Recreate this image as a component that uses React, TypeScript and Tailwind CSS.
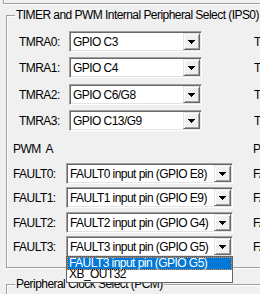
import React from 'react'

const tmraRows = [
  { left: 'TMRA0:', value: 'GPIO C3', right: 'TMRB0:' },
  { left: 'TMRA1:', value: 'GPIO C4', right: 'TMRB1:' },
  { left: 'TMRA2:', value: 'GPIO C6/G8', right: 'TMRB2:' },
  { left: 'TMRA3:', value: 'GPIO C13/G9', right: 'TMRB3:' },
]

const faultRows = [
  { left: 'FAULT0:', value: 'FAULT0 input pin (GPIO E8)', right: 'FAULT0:' },
  { left: 'FAULT1:', value: 'FAULT1 input pin (GPIO E9)', right: 'FAULT1:' },
  { left: 'FAULT2:', value: 'FAULT2 input pin (GPIO G4)', right: 'FAULT2:' },
  { left: 'FAULT3:', value: 'FAULT3 input pin (GPIO G5)', right: 'FAULT3:' },
]

function Arrow() {
  return (
    <svg width="7" height="4" viewBox="0 0 7 4" shapeRendering="crispEdges">
      <rect x="0" y="0" width="7" height="1" fill="#000" />
      <rect x="1" y="1" width="5" height="1" fill="#000" />
      <rect x="2" y="2" width="3" height="1" fill="#000" />
      <rect x="3" y="3" width="1" height="1" fill="#000" />
    </svg>
  )
}

function Combo({ value, className }: { value: string; className: string }) {
  return (
    <div
      className={`flex h-[21px] shrink-0 bg-white p-[1px] border border-t-[#a0a0a0] border-l-[#a0a0a0] border-b-white border-r-white shadow-[inset_1px_1px_0_#696969,inset_-1px_-1px_0_#e3e3e3] ${className}`}
    >
      <div className="flex flex-1 items-center overflow-hidden whitespace-nowrap pl-[2px]">{value}</div>
      <div className="flex h-[17px] w-[17px] items-center justify-center bg-[#f0f0f0] border border-t-[#e3e3e3] border-l-[#e3e3e3] border-b-[#696969] border-r-[#696969] shadow-[inset_1px_1px_0_#fff,inset_-1px_-1px_0_#a0a0a0]">
        <Arrow />
      </div>
    </div>
  )
}

function GroupTitle({ children }: { children: React.ReactNode }) {
  return (
    <div className="-mt-[8px] ml-[8px] w-fit whitespace-nowrap bg-[#f0f0f0] px-[1px] leading-[15px]">
      {children}
    </div>
  )
}

export default function App() {
  return (
    <div className="h-[294px] w-[260px] overflow-hidden bg-[#f0f0f0] font-['Liberation_Sans',Arial,sans-serif] text-[12px] tracking-[-0.55px] text-black">
      {/* bottom edge of the box above */}
      <div className="ml-[3px] h-[4px] w-[600px] border-b border-l border-[#a0a0a0] shadow-[inset_1px_0_0_#fff,0_1px_0_#fff]" />

      <div className="ml-[6px] mt-[11px] w-[520px] border border-[#a0a0a0] pb-[10px] shadow-[inset_1px_1px_0_#fff,1px_1px_0_#fff]">
        <GroupTitle>TIMER and PWM Internal Peripheral Select (IPS0)</GroupTitle>

        <div className="mt-[8px] flex flex-col">
          {tmraRows.map((r, i) => (
            <div
              key={r.left}
              className={`grid h-[21px] grid-cols-[247px_247px] ${i === 0 ? '' : i === 2 ? 'mt-[6px]' : 'mt-[5px]'}`}
            >
              <div className="flex items-center pl-[12px]">
                <span className="w-[50px]">{r.left}</span>
                <Combo value={r.value} className="w-[133px]" />
              </div>
              <div className="flex items-center whitespace-nowrap">{r.right}</div>
            </div>
          ))}

          <div className="mt-[11px] grid h-[14px] grid-cols-[246px_247px] leading-[14px]">
            <div className="whitespace-pre pl-[6px]">PWM  A</div>
            <div className="whitespace-pre">PWM  B</div>
          </div>

          {faultRows.map((r, i) => (
            <div
              key={r.left}
              className={`grid h-[21px] grid-cols-[246px_247px] ${i === 0 ? 'mt-[7px]' : i === 2 ? 'mt-[4px]' : 'mt-[3px]'}`}
            >
              <div className="relative flex items-center pl-[6px]">
                <span className="w-[53px]">{r.left}</span>
                <Combo value={r.value} className="w-[167px]" />
                {i === 3 && (
                  <div className="absolute left-[59px] top-[20px] z-10 w-[167px] border border-[#646464] bg-white">
                    <div className="h-[13px] whitespace-nowrap bg-[#0078d7] px-[2px] leading-[13px] text-white outline-1 -outline-offset-1 outline-dotted outline-[#ff8728]">
                      FAULT3 input pin (GPIO G5)
                    </div>
                    <div className="h-[12px] whitespace-nowrap px-[2px] leading-[9px]">XB_OUT32</div>
                  </div>
                )}
              </div>
              <div className="flex items-center whitespace-nowrap">{r.right}</div>
            </div>
          ))}
        </div>
      </div>

      <div className="ml-[6px] mt-[16px] h-[60px] w-[520px] border border-[#a0a0a0] shadow-[inset_1px_1px_0_#fff,1px_1px_0_#fff]">
        <GroupTitle>Peripheral Clock Select (PCM)</GroupTitle>
      </div>
    </div>
  )
}
